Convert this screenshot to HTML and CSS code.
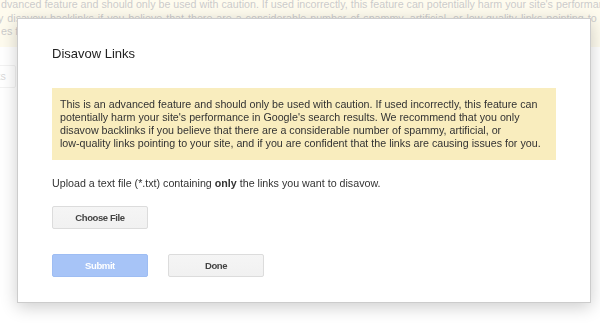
FILE: index.html
```html
<!DOCTYPE html>
<html lang="en">
<head>
    <meta charset="UTF-8">
    <meta name="viewport" content="width=device-width, initial-scale=1.0">
    <title>Disavow Links</title>
    <link rel="stylesheet" href="styles.css">
</head>
<body>

    <!-- page behind the dialog -->
    <div class="page">
        <div class="page-warning">
            <div class="page-line">dvanced feature and should only be used with caution. If used incorrectly, this feature can potentially harm your site's performance in Google's search results.</div>
            <div class="page-line second">y disavow backlinks if you believe that there are a considerable number of spammy, artificial, or low-quality links pointing to your site</div>
            <div class="page-line">es for you.</div>
        </div>
        <div class="page-toolbar">
            <span class="page-btn">Links</span>
        </div>
    </div>

    <div class="overlay"></div>

    <div class="dialog">
        <h1 class="dialog-title">Disavow Links</h1>

        <div class="warning">
            This is an advanced feature and should only be used with caution. If used incorrectly, this feature can<br>
            potentially harm your site's performance in Google's search results. We recommend that you only<br>
            disavow backlinks if you believe that there are a considerable number of spammy, artificial, or<br>
            low-quality links pointing to your site, and if you are confident that the links are causing issues for you.
        </div>

        <p class="upload-text">Upload a text file (*.txt) containing <strong>only</strong> the links you want to disavow.</p>

        <button type="button" class="btn">Choose File</button>

        <div class="actions">
            <button type="button" class="btn btn-primary" disabled>Submit</button>
            <button type="button" class="btn">Done</button>
        </div>
    </div>

</body>
</html>
```

FILE: styles.css
```css
/* Dasar halaman */
body {
    font-family: "Liberation Sans", Arial, sans-serif;
    font-size: 10.7px;
    color: #333;
    background: #fff;
    margin: 0;
    overflow: hidden;
}

/* Halaman di belakang dialog */
.page-warning {
    background-color: #f9edbe;
    margin-top: -2px;
    padding: 0 0 8px 1px;
    line-height: 13.5px;
    overflow: hidden;
}

.page-line {
    white-space: nowrap;
}

.page-line.second {
    margin-left: -3px;
    word-spacing: 1px;
}

.page-toolbar {
    padding-top: 18px;
}

.page-btn {
    display: inline-block;
    margin-left: -40px;
    padding: 5px 9px 5px 20px;
    line-height: 11px;
    border: 1px solid #ccc;
    border-radius: 2px;
    color: #666;
}

/* Lapisan putih transparan */
.overlay {
    position: fixed;
    top: 0;
    right: 0;
    bottom: 0;
    left: 0;
    background: rgba(255, 255, 255, 0.74);
}

/* Kotak dialog */
.dialog {
    position: absolute;
    top: 18px;
    left: 17px;
    width: 504px;
    padding: 27px 34px 25px 34px;
    background: #fff;
    border: 1px solid rgba(0, 0, 0, 0.2);
    box-shadow: 0 4px 16px rgba(0, 0, 0, 0.2);
}

.dialog-title {
    margin: 0 0 26px 0;
    font-size: 13px;
    font-weight: normal;
    line-height: 16px;
    color: #222;
}

/* Pesan peringatan */
.warning {
    background-color: #f9edbe;
    padding: 10px 8px 10px 8px;
    line-height: 13px;
    white-space: nowrap;
}

.upload-text {
    margin: 17px 0 16px 0;
    line-height: 13px;
}

/* Tombol */
.btn {
    display: block;
    width: 96px;
    height: 23px;
    padding: 0;
    font-family: "Liberation Sans", Arial, sans-serif;
    font-size: 9.5px;
    font-weight: bold;
    letter-spacing: -0.4px;
    color: #444;
    background: linear-gradient(#f5f5f5, #f1f1f1);
    border: 1px solid #dcdcdc;
    border-radius: 2px;
}

.actions {
    display: flex;
    gap: 20px;
    margin-top: 25px;
}

.btn-primary {
    color: #fff;
    background: #a7c4f7;
    border-color: #9ebdf3;
}
```
